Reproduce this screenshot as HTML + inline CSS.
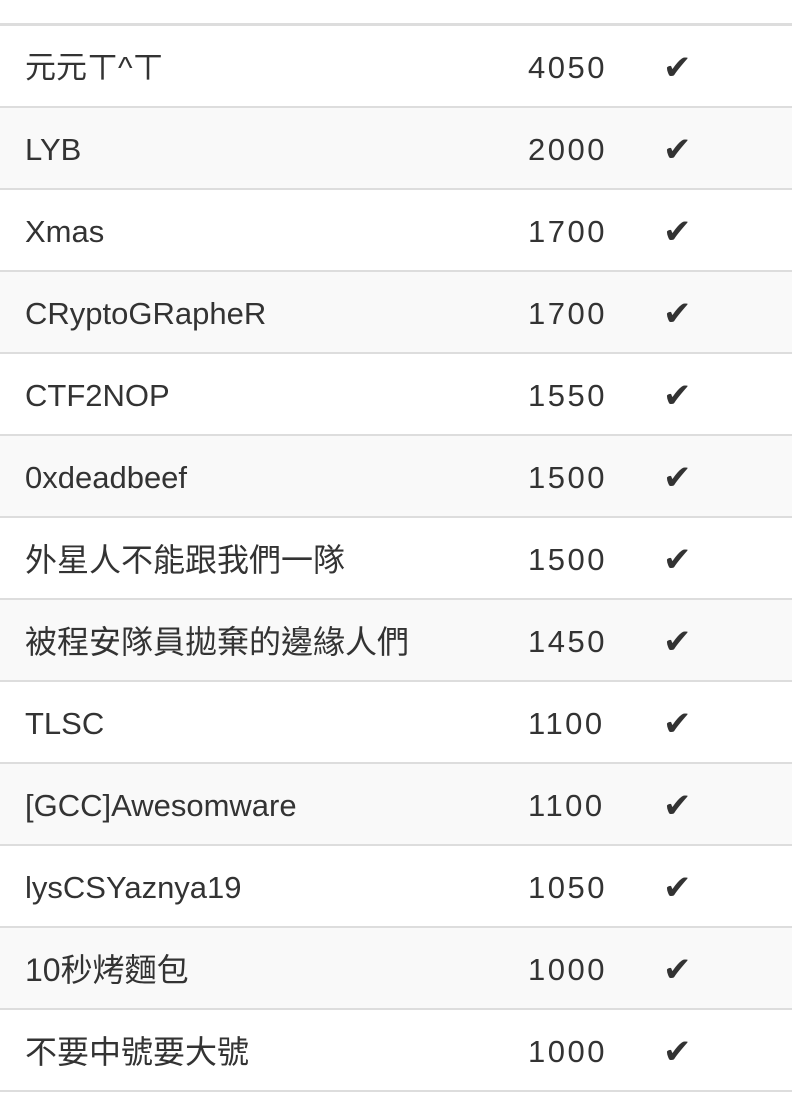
<!DOCTYPE html>
<html><head><meta charset="utf-8"><style>
body{margin:0;width:792px;height:1072px;overflow:hidden;background:#fff;font-family:"Liberation Sans","Noto Sans CJK TC",sans-serif;color:#333;}
.top{position:absolute;top:23px;left:0;width:792px;height:3px;background:#ddd}
.row{position:absolute;left:0;width:792px;height:80px;border-bottom:2px solid #ddd;font-size:31px;line-height:84px}
.row.a{background:#f9f9f9}
.n{position:absolute;left:25px}
.n.cjk{font-size:32px}
.s{position:absolute;left:528px;letter-spacing:2.5px}
.c{position:absolute;left:663px;font-family:"DejaVu Sans",sans-serif;font-size:34px;color:#333}
</style></head><body>
<div class="top"></div>
<div class="row" style="top:26px"><span class="n">元元ㄒ^ㄒ</span><span class="s">4050</span><span class="c">✔</span></div>
<div class="row a" style="top:108px"><span class="n">LYB</span><span class="s">2000</span><span class="c">✔</span></div>
<div class="row" style="top:190px"><span class="n">Xmas</span><span class="s">1700</span><span class="c">✔</span></div>
<div class="row a" style="top:272px"><span class="n">CRyptoGRapheR</span><span class="s">1700</span><span class="c">✔</span></div>
<div class="row" style="top:354px"><span class="n">CTF2NOP</span><span class="s">1550</span><span class="c">✔</span></div>
<div class="row a" style="top:436px"><span class="n">0xdeadbeef</span><span class="s">1500</span><span class="c">✔</span></div>
<div class="row" style="top:518px"><span class="n cjk">外星人不能跟我們一隊</span><span class="s">1500</span><span class="c">✔</span></div>
<div class="row a" style="top:600px"><span class="n cjk">被程安隊員拋棄的邊緣人們</span><span class="s">1450</span><span class="c">✔</span></div>
<div class="row" style="top:682px"><span class="n">TLSC</span><span class="s">1100</span><span class="c">✔</span></div>
<div class="row a" style="top:764px"><span class="n">[GCC]Awesomware</span><span class="s">1100</span><span class="c">✔</span></div>
<div class="row" style="top:846px"><span class="n">lysCSYaznya19</span><span class="s">1050</span><span class="c">✔</span></div>
<div class="row a" style="top:928px"><span class="n cjk">10秒烤麵包</span><span class="s">1000</span><span class="c">✔</span></div>
<div class="row" style="top:1010px"><span class="n cjk">不要中號要大號</span><span class="s">1000</span><span class="c">✔</span></div>
</body></html>
